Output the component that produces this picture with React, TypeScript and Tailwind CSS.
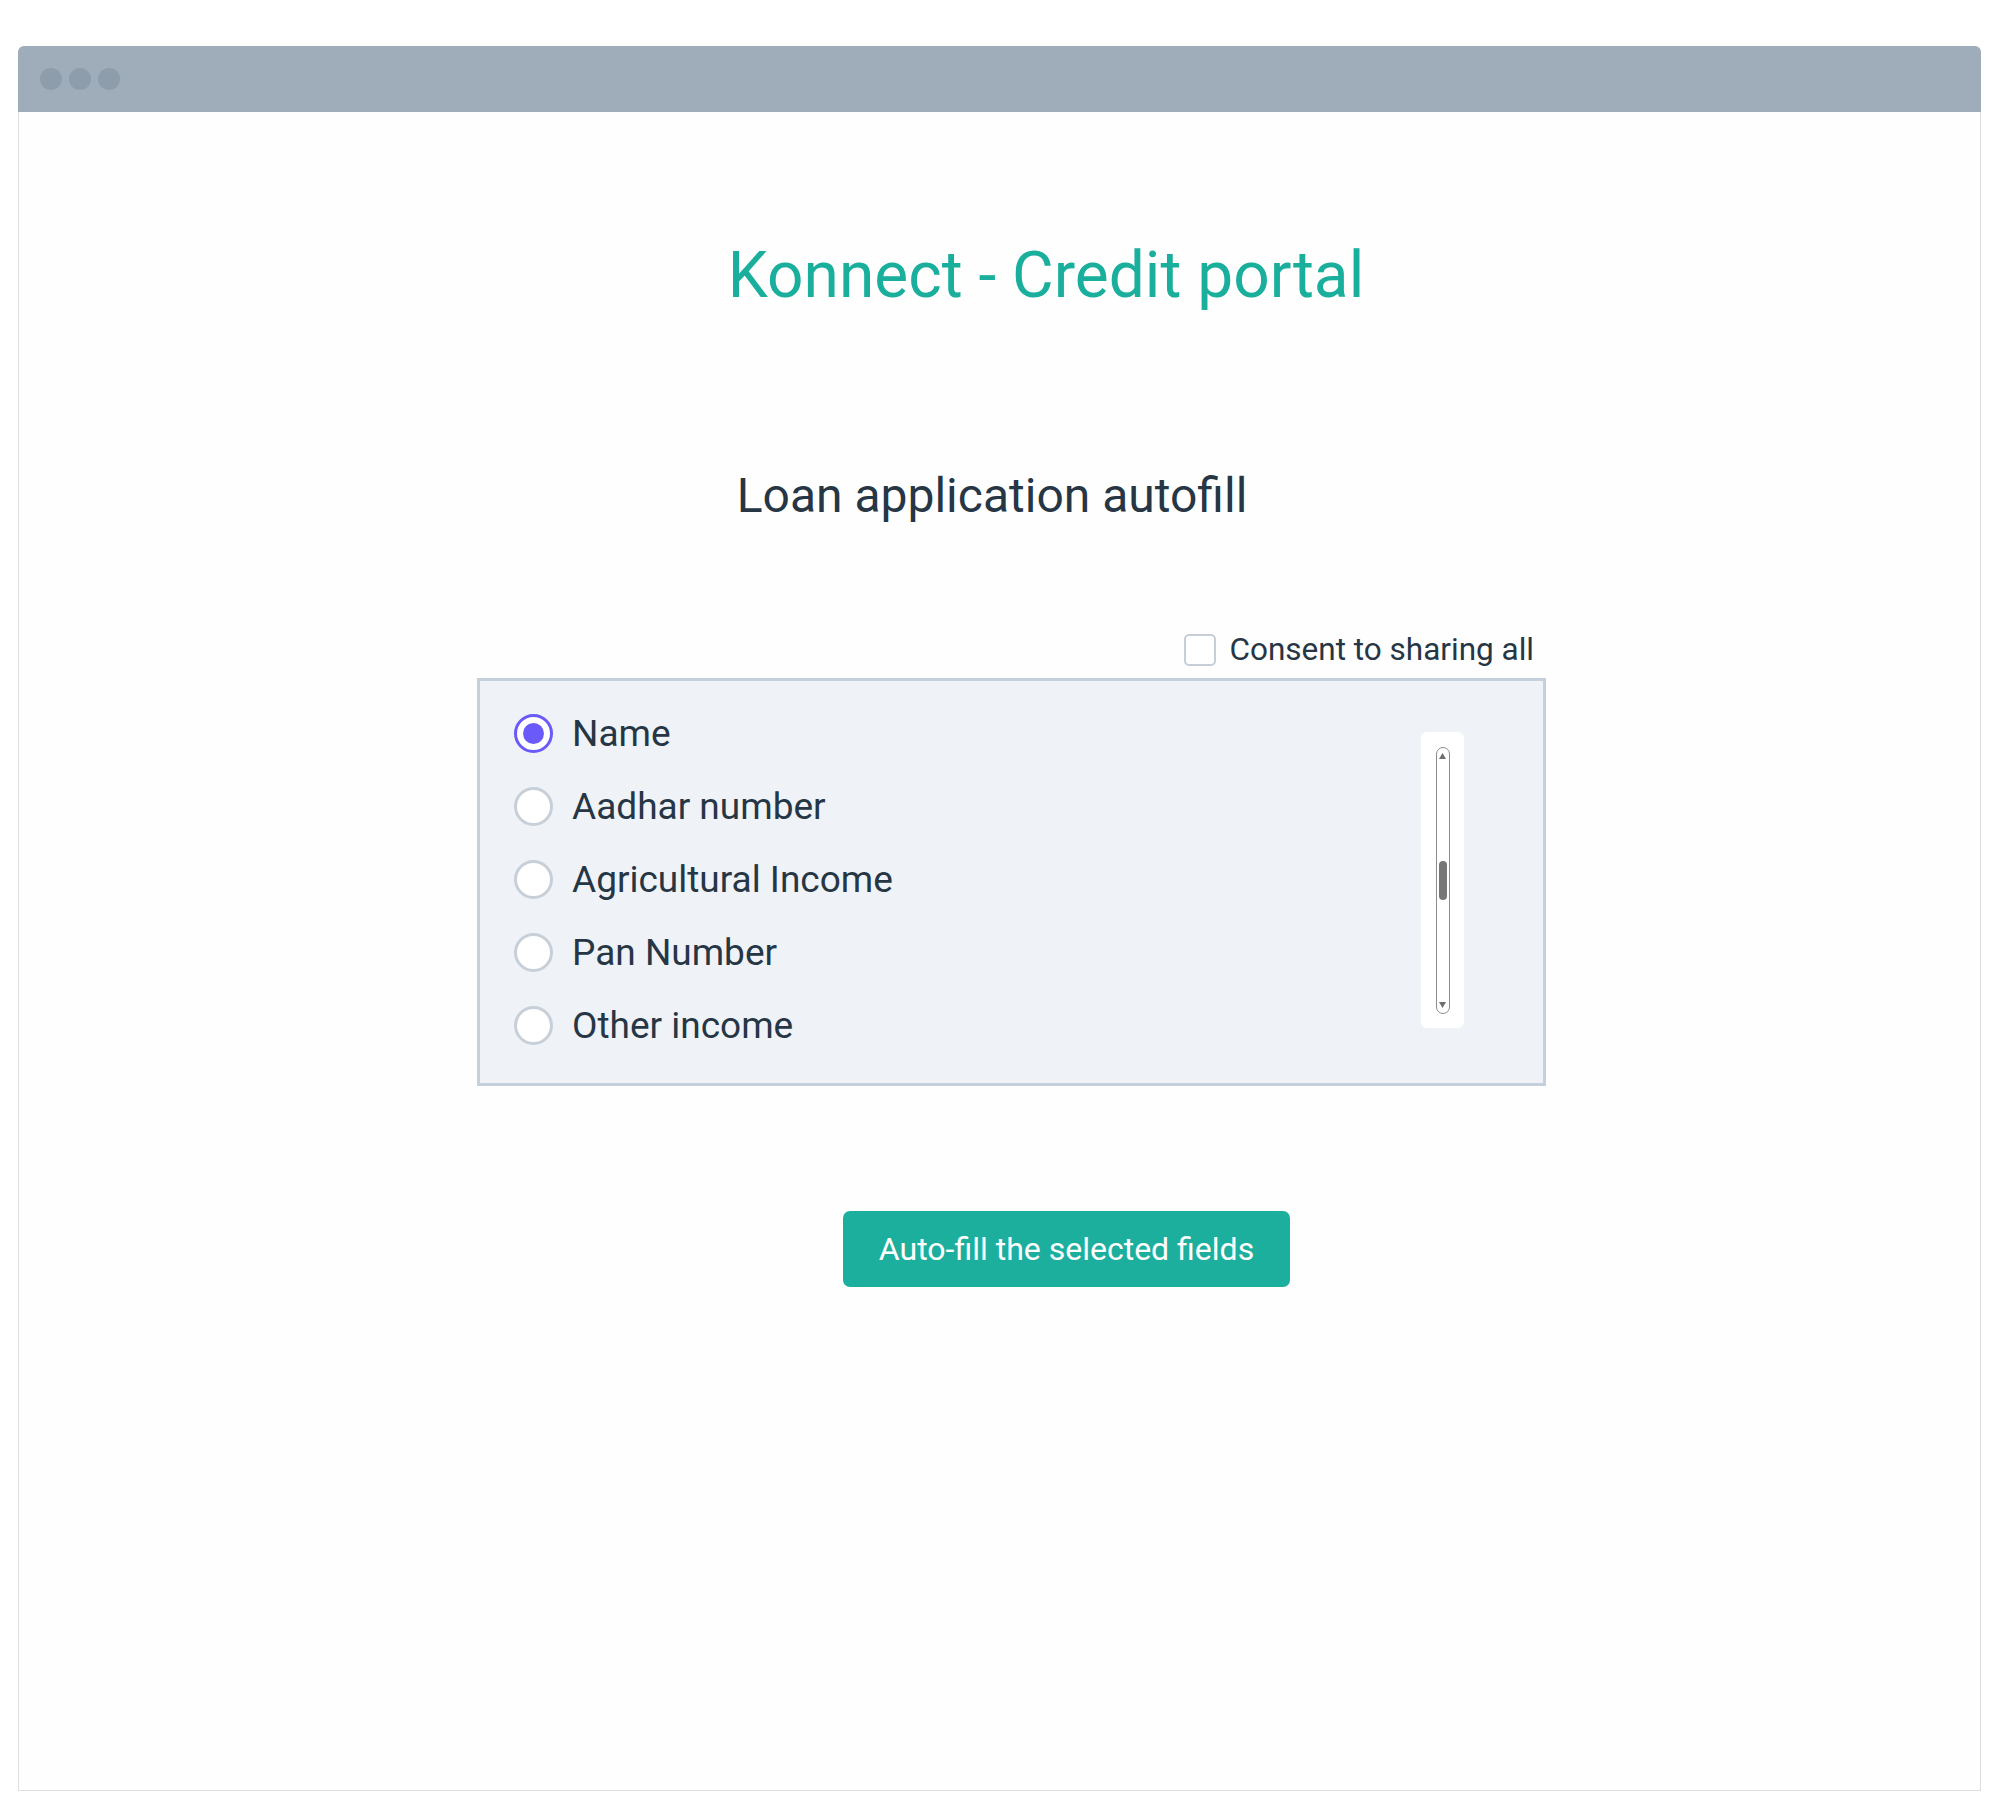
const fields = [
  { label: "Name", checked: true },
  { label: "Aadhar number", checked: false },
  { label: "Agricultural Income", checked: false },
  { label: "Pan Number", checked: false },
  { label: "Other income", checked: false },
];

function Radio({ checked }: { checked: boolean }) {
  if (checked) {
    return (
      <span className="flex h-[39px] w-[39px] shrink-0 items-center justify-center rounded-full border-[3px] border-[#6a5af9] bg-white">
        <span className="h-[21px] w-[21px] rounded-full bg-[#6a5af9]" />
      </span>
    );
  }
  return <span className="h-[39px] w-[39px] shrink-0 rounded-full border-[3px] border-[#c7d0d8] bg-white" />;
}

function FakeScrollbar() {
  return (
    <div className="mt-[51px] mr-[79px] flex h-[296px] w-[43px] shrink-0 justify-center rounded-[6px] bg-white pt-[15px]">
      <div className="flex h-[267px] w-[14px] flex-col items-center rounded-full border border-[#8c8c8c] bg-white">
        {/* arrows */}
        <svg className="mt-[5px]" width="7" height="6" viewBox="0 0 7 6">
          <path d="M3.5 0L7 6H0z" fill="#6e6e6e" />
        </svg>
        <div className="mt-[102px] h-[39px] w-[8px] rounded-full bg-[#777777]" />
        <svg className="mt-auto mb-[5px]" width="7" height="6" viewBox="0 0 7 6">
          <path d="M0 0h7L3.5 6z" fill="#6e6e6e" />
        </svg>
      </div>
    </div>
  );
}

export default function App() {
  return (
    <div className="min-h-[1811px] bg-white pt-[46px] pl-[18px] font-[Roboto,sans-serif]">
      <div className="flex h-[1745px] w-[1963px] flex-col">
        {/* title bar */}
        <div className="flex h-[66px] shrink-0 items-center gap-[7px] rounded-t-[6px] bg-[#9eadb9] pl-[22px]">
          <span className="h-[22px] w-[22px] rounded-full bg-[#8e9dab]" />
          <span className="h-[22px] w-[22px] rounded-full bg-[#8e9dab]" />
          <span className="h-[22px] w-[22px] rounded-full bg-[#8e9dab]" />
        </div>

        <div className="flex flex-1 flex-col border-x border-b border-[#dedede] bg-[#fefefe]">
          <h1 className="mt-[132px] pl-[93px] text-center text-[64px] leading-[64px] font-normal text-[#1aaf9c]">
            Konnect - Credit portal
          </h1>

          <h2 className="mt-[164px] pr-[15px] text-center text-[48px] leading-[48px] font-normal text-[#263645]">
            Loan application autofill
          </h2>

          <div className="mt-[114px] ml-[458px] w-[1069px]">
            <label className="flex h-[32px] items-center justify-end gap-[13px] pr-[12px]">
              <span className="h-[32px] w-[32px] rounded-[5px] border-2 border-[#c6cfd7] bg-white" />
              <span className="text-[31.5px] leading-[32px] text-[#263645]">Consent to sharing all</span>
            </label>

            <div className="mt-[12px] flex h-[408px] border-[3px] border-[#c4d0db] bg-[#eff3f7]">
              <ul className="flex-1 pt-[16px] pl-[34px]">
                {fields.map((f) => (
                  <li key={f.label} className="flex h-[73px] items-center gap-[19px]">
                    <Radio checked={f.checked} />
                    <span className="text-[37px] leading-[40px] text-[#263645]">{f.label}</span>
                  </li>
                ))}
              </ul>
              <FakeScrollbar />
            </div>
          </div>

          <button className="mt-[125px] ml-[824px] flex h-[76px] w-[447px] items-center justify-center rounded-[7px] bg-[#1caf9e] text-[32px] leading-[36px] text-white">
            Auto-fill the selected fields
          </button>
        </div>
      </div>
    </div>
  );
}
